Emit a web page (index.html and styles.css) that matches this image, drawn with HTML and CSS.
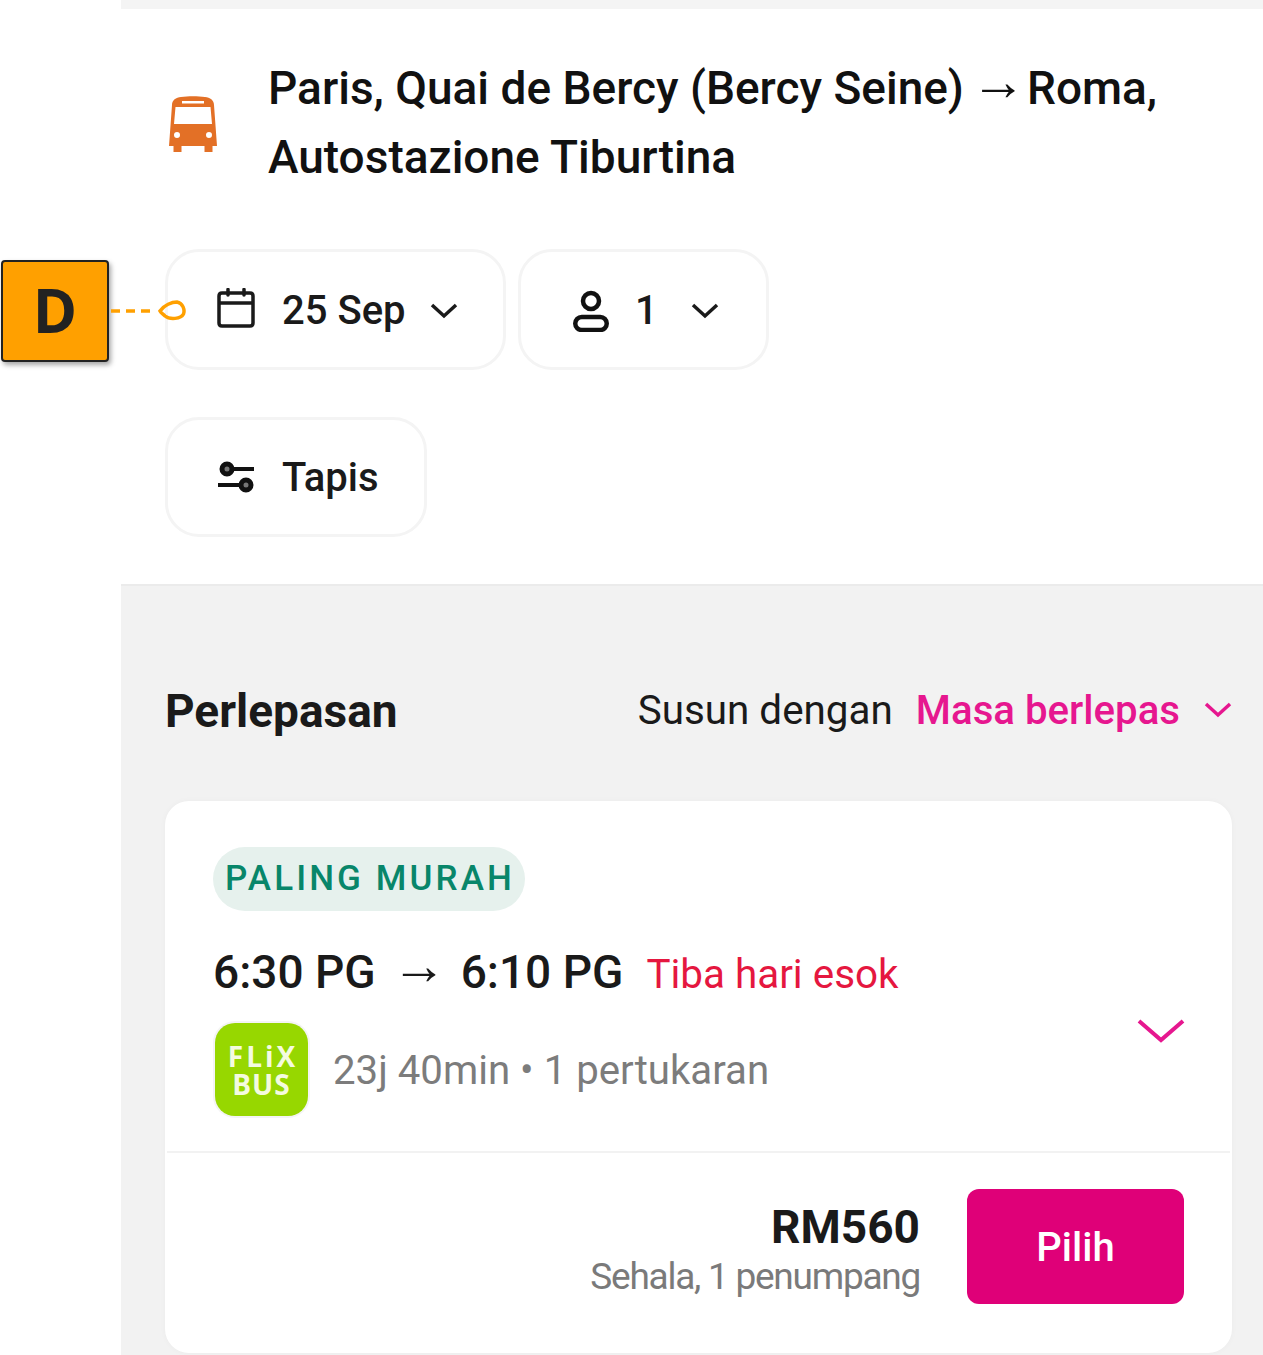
FILE: index.html
```html
<!DOCTYPE html>
<html lang="ms">
<head>
<meta charset="utf-8">
<title>Perlepasan</title>
<link rel="stylesheet" href="styles.css">
</head>
<body>
<div class="page">
  <main class="panel">
    <section class="hero">
      <div class="route">
        <svg class="bus" viewBox="0 0 48 56" aria-hidden="true">
          <path fill="#e37026" fill-rule="evenodd" d="M3 9C3 4 7 1.500 12 1 19 0 29 0 36 1 41 1.500 45 4 45 9L48 50H43.500V56H35.500V50H12.500V56H4.500V50H0ZM13 5V7.500H35V5ZM6.500 11 5 28H43L41.500 11ZM8 36A3 3 0 1 0 8 42 3 3 0 1 0 8 36ZM40 36A3 3 0 1 0 40 42 3 3 0 1 0 40 36Z"/>
        </svg>
        <h1 class="route-title">
          <span class="title-line">
            <span>Paris, Quai de Bercy (Bercy Seine)</span>
            <span class="title-arrow">→</span>
            <span>Roma,</span>
          </span>
          <span class="title-line">Autostazione Tiburtina</span>
        </h1>
      </div>
      <div class="chips">
        <button class="chip chip-date">
          <svg class="chip-icon cal" viewBox="0 0 38 40" aria-hidden="true"><path fill="none" stroke="#1a1a1a" stroke-width="3.500" stroke-linejoin="round" stroke-linecap="round" d="M5 5H33Q36 5 36 8V35Q36 38 33 38H5Q2 38 2 35V8Q2 5 5 5ZM2 15H36M11 1.500V7M27 1.500V7"/></svg>
          <span>25 Sep</span>
          <svg class="chev" viewBox="0 0 28 16" aria-hidden="true"><path d="M2 2 14 13 26 2"/></svg>
        </button>
        <button class="chip chip-pax">
          <svg class="chip-icon person" viewBox="0 0 36 42" aria-hidden="true"><circle cx="18" cy="11" r="8" fill="none" stroke="#111" stroke-width="4.500"/><rect x="2.250" y="27" width="31.500" height="13" rx="6.500" fill="none" stroke="#111" stroke-width="4.500"/></svg>
          <span>1</span>
          <svg class="chev" viewBox="0 0 28 16" aria-hidden="true"><path d="M2 2 14 13 26 2"/></svg>
        </button>
      </div>
      <button class="chip chip-filter">
        <svg class="chip-icon filter" viewBox="0 0 36 32" aria-hidden="true"><path stroke="#111" stroke-width="4" d="M10 8H36M0 24H26"/><circle cx="9" cy="8" r="5" fill="#777" stroke="#111" stroke-width="5"/><circle cx="28" cy="24" r="5" fill="#777" stroke="#111" stroke-width="5"/></svg>
        <span>Tapis</span>
      </button>
    </section>
    <section class="results">
      <header class="results-head">
        <h2 class="results-title">Perlepasan</h2>
        <div class="sort">
          <span class="sort-label">Susun dengan</span>
          <span class="sort-value">Masa berlepas</span>
          <svg class="chev pink" viewBox="0 0 28 16" aria-hidden="true"><path d="M2 2 14 13 26 2"/></svg>
        </div>
      </header>
      <article class="card">
        <div class="card-main">
          <span class="tag">PALING MURAH</span>
          <div class="times">
            <span class="time">6:30 PG</span>
            <span class="arrow">→</span>
            <span class="time">6:10 PG</span>
            <span class="next-day">Tiba hari esok</span>
          </div>
          <div class="meta">
            <div class="logo"><span class="logo-top">FLiX</span><span>BUS</span></div>
            <span class="duration">23j 40min • 1 pertukaran</span>
          </div>
          <svg class="card-chev" viewBox="0 0 48 26" aria-hidden="true"><path d="M2 3 24 22 46 3"/></svg>
        </div>
        <div class="card-foot">
          <div class="price">
            <div class="amount">RM560</div>
            <div class="price-note">Sehala, 1 penumpang</div>
          </div>
          <button class="select">Pilih</button>
        </div>
      </article>
    </section>
  </main>
  <div class="callout">
    <div class="callout-box">D</div>
    <svg class="callout-line" viewBox="0 0 76 24" aria-hidden="true"><path d="M1 12H46" stroke-dasharray="9 6"/><path d="M50 12C54 6 62 3 67 3 73 4 75 11 73.500 15 71 20 60 21 55 17 53 15 51 14 50 12Z"/></svg>
  </div>
</div>
</body>
</html>
```

FILE: styles.css
```css
* { box-sizing: border-box; }
html, body { margin: 0; padding: 0; }
body {
  width: 1263px;
  height: 1355px;
  overflow: hidden;
  background: #fff;
  font-family: Roboto, "Liberation Sans", sans-serif;
  color: #1a1a1a;
}
.page { position: relative; height: 1355px; padding-left: 121px; }
.panel { height: 100%; display: flex; flex-direction: column; }
button { font-family: inherit; color: inherit; background: none; cursor: pointer; }

.hero {
  height: 586px;
  flex: none;
  border-top: 9px solid #f4f4f4;
  border-bottom: 2px solid #ebebeb;
  padding: 45px 30px 0 44px;
}
.route { display: flex; align-items: center; gap: 51px; padding-left: 4px; }
.bus { width: 48px; height: 56px; flex: none; margin-top: 2px; }
.route-title {
  margin: 0;
  font-size: 46px;
  line-height: 69px;
  font-weight: 500;
  color: #111;
}
.title-line { display: flex; align-items: baseline; height: 69px; }
.title-arrow {
  align-self: center;
  line-height: 1;
  font-size: 55px;
  padding-bottom: 14px;
  margin: 0 1px 0 7px;
}
.chips { display: flex; gap: 12px; margin-top: 57px; }
.chip {
  display: flex;
  align-items: center;
  height: 121px;
  border: 3px solid #f4f4f4;
  border-radius: 34px;
  font-size: 40px;
  font-weight: 500;
  background: #fff;
  padding: 2px 0 0;
  color: #1a1a1a;
}
.chip-icon { flex: none; }
.chip-date { width: 341px; padding-left: 49px; }
.chip-date .cal { width: 38px; height: 40px; margin: 0 27px 5px 0; }
.chip-date .chev { margin-left: 24px; }
.chip-pax { width: 251px; padding-left: 52px; }
.chip-pax .person { width: 36px; height: 42px; margin-right: 26px; }
.chip-pax .chev { margin-left: 33px; }
.chip-filter { width: 262px; height: 120px; margin-top: 47px; padding: 0 0 0 50px; }
.chip-filter .filter { width: 36px; height: 32px; margin-right: 28px; }
.chev { width: 28px; height: 16px; flex: none; fill: none; stroke: #1a1a1a; stroke-width: 3.500; }
.chev.pink { stroke: #e6178f; }

.results { flex: 1; background: #f2f2f2; padding: 0 31px 0 44px; }
.results-head {
  height: 215px;
  display: flex;
  align-items: center;
  justify-content: space-between;
  padding-top: 35px;
}
.results-title { margin: 0; font-size: 46px; font-weight: 700; }
.sort { display: flex; align-items: center; font-size: 40.400px; margin-bottom: 2px; }
.sort-label { margin-right: 23px; }
.sort-value { color: #e6178f; margin-right: 24px; font-size: 40.200px; font-weight: 500; }

.card {
  background: #fff;
  border-radius: 24px;
  height: 552px;
  box-shadow: 0 0 6px rgba(0, 0, 0, .03);
  display: flex;
  flex-direction: column;
}
.card-main {
  position: relative;
  height: 352px;
  margin: 0 2px;
  padding: 46px 0 0 46px;
  border-bottom: 2px solid #f2f2f2;
}
.tag {
  display: inline-block;
  height: 64px;
  line-height: 64px;
  padding: 0 10px 0 12px;
  border-radius: 32px;
  background: #e6f1ed;
  color: #08866a;
  font-size: 35px;
  font-weight: 500;
  letter-spacing: 3.100px;
}
.times { display: flex; align-items: baseline; margin-top: 26px; height: 70px; line-height: 70px; }
.time { font-size: 46px; font-weight: 500; color: #1a1a1a; }
.arrow {
  align-self: center;
  line-height: 1;
  font-size: 55px;
  padding-bottom: 14px;
  margin: 0 14px 0 16px;
  color: #1a1a1a;
}
.next-day { font-size: 40.400px; color: #e5173f; margin-left: 23px; }
.meta { display: flex; align-items: center; gap: 25px; margin-top: 16px; padding-left: 2px; }
.logo {
  width: 93px;
  height: 93px;
  border-radius: 20px;
  background: #97d700;
  box-shadow: 0 0 0 2px #f4f4f4;
  color: #f4fbe0;
  display: flex;
  flex-direction: column;
  align-items: center;
  justify-content: center;
  font-family: "Open Sans", sans-serif;
  font-size: 28px;
  line-height: 28px;
  font-weight: 700;
  letter-spacing: 1px;
}
.logo-top { letter-spacing: 3px; padding-left: 3px; }
.duration { font-size: 40.200px; color: #7c7c7c; padding-top: 2px; }
.card-chev {
  position: absolute;
  right: 45px;
  top: 217px;
  width: 48px;
  height: 26px;
  fill: none;
  stroke: #e6178f;
  stroke-width: 4;
}
.card-foot {
  flex: 1;
  display: flex;
  align-items: flex-start;
  justify-content: flex-end;
  gap: 47px;
  padding: 36px 48px 0 0;
}
.price { text-align: right; }
.amount { font-size: 46px; font-weight: 700; line-height: 58px; margin-top: 9px; color: #1a1a1a; }
.price-note { font-size: 37px; line-height: 42px; color: #7a7a7a; letter-spacing: -1.250px; }
.select {
  width: 217px;
  height: 115px;
  border: 0;
  border-radius: 12px;
  padding-top: 2px;
  background: #df0078;
  color: #fff;
  font-size: 40px;
  font-weight: 500;
}

.callout { position: absolute; left: 1px; top: 260px; display: flex; align-items: center; }
.callout-box {
  width: 108px;
  height: 102px;
  margin-right: 1px;
  background: #ffa000;
  border: 2px solid #222;
  border-radius: 4px;
  box-shadow: 2px 3px 5px rgba(0, 0, 0, .35);
  color: #222;
  font-family: "Open Sans", sans-serif;
  font-weight: 700;
  font-size: 60px;
  line-height: 96px;
  text-align: center;
}
.callout-line { width: 76px; height: 24px; fill: none; stroke: #ffa000; stroke-width: 3.500; }
```
